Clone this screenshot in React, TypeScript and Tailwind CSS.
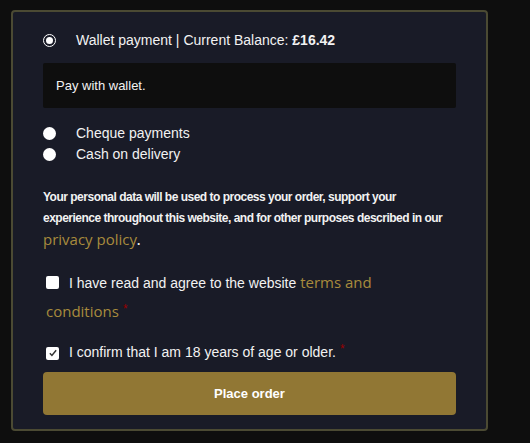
import { useState } from 'react'

const sans = "font-['Liberation_Sans',Arial,sans-serif]"
const link = "font-['Open_Sans',sans-serif] text-[#a88b3d]"

function Radio({ checked }: { checked: boolean }) {
  if (checked) {
    return (
      <span className="flex h-[13px] w-[13px] items-center justify-center rounded-full border-[1.5px] border-white bg-[#191b27]">
        <span className="h-[7px] w-[7px] rounded-full bg-white" />
      </span>
    )
  }
  return <span className="block h-[13px] w-[13px] rounded-full bg-white" />
}

function Checkbox({ checked }: { checked: boolean }) {
  return (
    <span className="inline-flex h-[13px] w-[13px] shrink-0 items-center justify-center rounded-[2px] bg-white align-[-1px]">
      {checked && (
        <svg viewBox="0 0 12 12" className="h-[10px] w-[10px]">
          <path d="M2.2 6.4 4.7 8.9 9.8 2.8" fill="none" stroke="#333" strokeWidth="1.8" />
        </svg>
      )}
    </span>
  )
}

function Required() {
  return <span className="ml-[4px] align-[4px] text-[12px] leading-none text-[#990000]">*</span>
}

export default function App() {
  const [method] = useState('wallet')

  const methods = [
    { id: 'cheque', label: 'Cheque payments' },
    { id: 'cod', label: 'Cash on delivery' },
  ]

  return (
    <div className={`min-h-[443px] bg-[#0e0e0e] pl-[11px] pt-[10px] text-[#f2f2f2] ${sans}`}>
      <div className="h-[421px] w-[477px] rounded-[4px] border-2 border-[#4b4a33] bg-[#191b27] px-[30px] pt-[18px]">
        <label className="flex h-5 items-center text-[14px]">
          <Radio checked={method === 'wallet'} />
          <span className="ml-[20px]">
            Wallet payment | Current Balance: <b className="font-bold">£16.42</b>
          </span>
        </label>

        <div className="mt-[13px] flex h-[45px] items-center rounded-[2px] bg-[#0e0e0e] px-[13px] text-[13px]">
          Pay with wallet.
        </div>

        <div className="mt-[15px]">
          {methods.map(m => (
            <label key={m.id} className="flex h-[21px] items-center text-[14px]">
              <Radio checked={method === m.id} />
              <span className="ml-[20px]">{m.label}</span>
            </label>
          ))}
        </div>

        <p className="mt-[22px] text-[12px] font-bold leading-[21px] tracking-[-0.5px]">
          Your personal data will be used to process your order, support your experience throughout this website, and for other purposes described in our{' '}
          <a className={`${link} text-[15px] font-normal tracking-normal`}>privacy policy</a>.
        </p>

        <p className="mt-[16px] pl-[3px] text-[14px] leading-[28px]">
          <Checkbox checked={false} />
          <span className="ml-[10px]">I have read and agree to the website </span>
          <a className={`${link} text-[15px]`}>terms and conditions</a>
          <Required />
        </p>

        <p className="mt-[12px] pl-[3px] text-[14px] leading-[28px]">
          <Checkbox checked={true} />
          <span className="ml-[10px]">I confirm that I am 18 years of age or older.</span>
          <Required />
        </p>

        <button className="mt-[6px] h-[43px] w-full rounded-[4px] bg-[#917734] text-[13px] font-bold text-white">
          Place order
        </button>
      </div>
    </div>
  )
}
